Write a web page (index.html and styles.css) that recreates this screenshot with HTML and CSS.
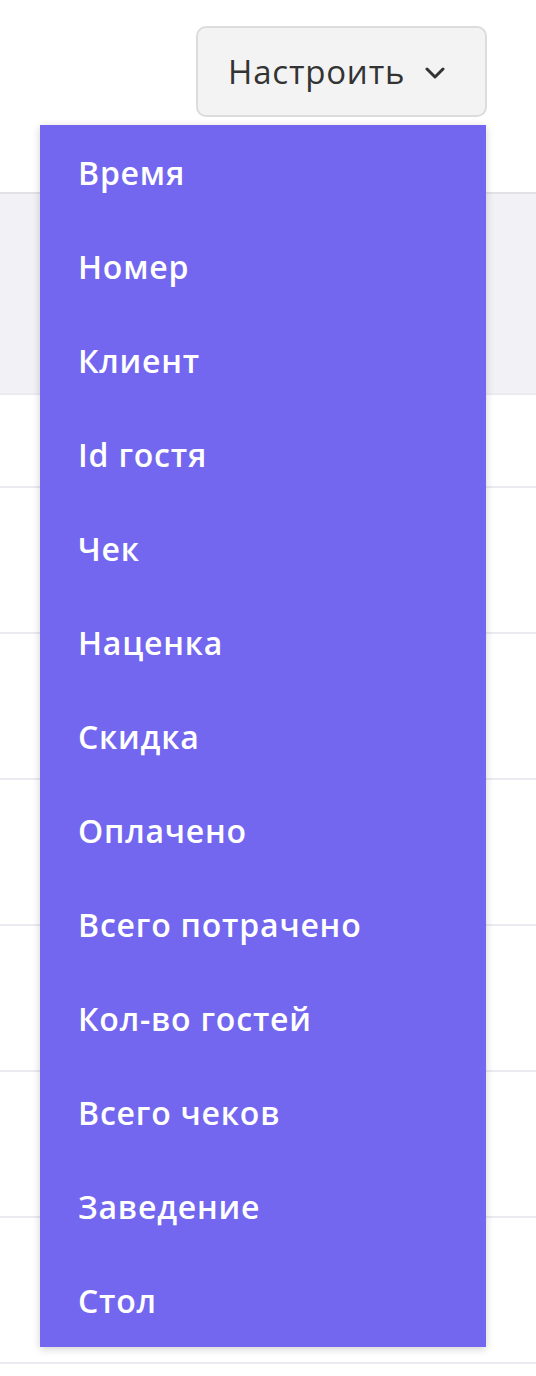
FILE: index.html
```html
<!DOCTYPE html>
<html lang="ru">
<head>
<meta charset="utf-8">
<title>Настроить</title>
<link rel="stylesheet" href="styles.css">
</head>
<body>
<div class="page">
  <div class="toolbar">
    <div class="picker">
      <button class="picker-btn" type="button">
        <span class="picker-label">Настроить</span>
        <svg class="chevron" width="20" height="12" viewBox="0 0 20 12" aria-hidden="true"><path d="M2 2 L10 10 L18 2" fill="none" stroke="#333" stroke-width="3" stroke-linecap="round" stroke-linejoin="round"/></svg>
      </button>
      <ul class="menu">
        <li class="menu-item">Время</li>
        <li class="menu-item">Номер</li>
        <li class="menu-item">Клиент</li>
        <li class="menu-item">Id гостя</li>
        <li class="menu-item">Чек</li>
        <li class="menu-item">Наценка</li>
        <li class="menu-item">Скидка</li>
        <li class="menu-item">Оплачено</li>
        <li class="menu-item">Всего потрачено</li>
        <li class="menu-item">Кол-во гостей</li>
        <li class="menu-item">Всего чеков</li>
        <li class="menu-item">Заведение</li>
        <li class="menu-item">Стол</li>
      </ul>
    </div>
  </div>
  <div class="table">
    <div class="thead"></div>
    <div class="row row-first"></div>
    <div class="row"></div>
    <div class="row"></div>
    <div class="row"></div>
    <div class="row"></div>
    <div class="row"></div>
    <div class="row"></div>
  </div>
</div>
</body>
</html>
```
FILE: styles.css
```css
html, body {
  margin: 0;
  padding: 0;
  background: #ffffff;
}
body {
  font-family: "Open Sans", "Noto Sans", "Liberation Sans", sans-serif;
}
.page {
  width: 536px;
}
.toolbar {
  display: flex;
  justify-content: flex-end;
  padding: 26px 49px 0 0;
  height: 192px;
  box-sizing: border-box;
}
.picker {
  position: relative;
}
.picker-btn {
  display: flex;
  align-items: center;
  width: 291px;
  height: 91px;
  box-sizing: border-box;
  padding: 0 0 0 30px;
  margin: 0;
  border: 2px solid #dcdcdc;
  border-radius: 10px;
  background: #f3f3f3;
  color: #333333;
  font-family: inherit;
  font-size: 33px;
  font-weight: 400;
  letter-spacing: 0.8px;
  cursor: pointer;
}
.picker-label {
  line-height: 1;
}
.chevron {
  margin-left: 20px;
  margin-top: 2px;
}
.menu {
  position: absolute;
  top: 99px;
  right: 1px;
  width: 446px;
  margin: 0;
  padding: 0;
  list-style: none;
  background: #7367f0;
  box-shadow: 0 2px 8px rgba(0, 0, 0, 0.18);
  z-index: 10;
}
.menu-item {
  height: 94px;
  display: flex;
  align-items: center;
  padding-left: 38px;
  color: #ffffff;
  font-size: 32px;
  font-weight: 600;
  letter-spacing: 0.8px;
}
.table {
  border-top: 2px solid #e2e2e6;
}
.thead {
  height: 199px;
  background: #f2f2f6;
  border-bottom: 2px solid #ebeaf0;
}
.row {
  height: 144px;
  border-bottom: 2px solid #ebeaf0;
}
.row-first {
  height: 91px;
}
```
